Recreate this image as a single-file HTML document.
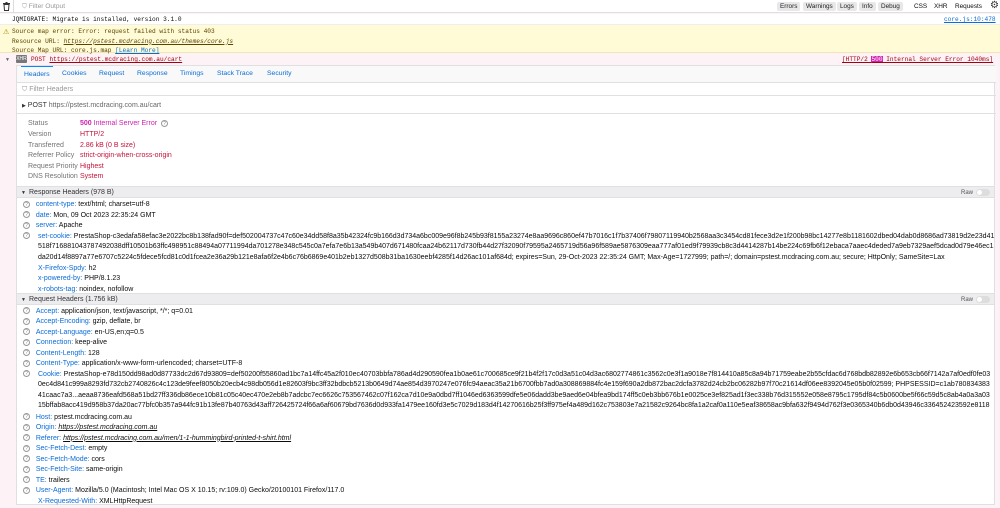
<!DOCTYPE html>
<html><head><meta charset="utf-8"><style>
*{margin:0;padding:0;box-sizing:border-box}
body{width:1000px;height:508px;overflow:hidden;background:#fdf2f5;font-family:"Liberation Sans",sans-serif;font-size:7px;color:#0c0c0d;position:relative}
.abs{position:absolute;white-space:nowrap}
.mono{font-family:"Liberation Mono",monospace;font-size:6.15px}
#tb{left:0;top:0;width:1000px;height:13px;background:#fff;border-bottom:1px solid #e0e0e2}
.btn{position:absolute;top:2px;height:9px;background:#e8e8ea;border-radius:2px;font-size:6.4px;line-height:9px;padding:0 3px;color:#222}
#panel{left:16px;top:65px;width:979px;height:440px;background:#fff;border:1px solid #e0e0e2}
.row{position:absolute;left:0;width:979px;white-space:nowrap;overflow:hidden;line-height:10.6px;height:10.6px}
.lbl{color:#737373}
.red{color:#c5123a}
.k{color:#0a6cd6}
.q{display:inline-block;width:7px;height:7px;border:0.8px solid #999;border-radius:50%;font-size:5px;line-height:6px;text-align:center;color:#888;vertical-align:middle}
.sec{position:absolute;left:0;width:977px;height:12px;background:#ededf0;line-height:12px;font-size:7px;color:#333;padding-left:12px;border-top:1px solid #e0e0e2;border-bottom:1px solid #e0e0e2}
.raw{position:absolute;right:4px;top:0;font-size:6px;color:#555}
.tog{display:inline-block;width:14px;height:7px;border-radius:4px;background:#ddd;vertical-align:middle;margin-left:3px;position:relative}
.tog:after{content:"";position:absolute;left:1px;top:1px;width:5px;height:5px;border-radius:50%;background:#fff}
</style></head><body>
<div id="tb" class="abs">
<svg style="position:absolute;left:3px;top:2px" width="7" height="9" viewBox="0 0 7 9"><rect x="0" y="1" width="7" height="1.2" fill="#333"/><rect x="2.5" y="0" width="2" height="1" fill="#333"/><path d="M1 2.5h5l-.5 6h-4z" fill="none" stroke="#333" stroke-width="1"/></svg>
<div class="abs" style="left:13px;top:0;width:1px;height:13px;background:#ddd"></div>
<div class="abs" style="left:22px;top:3px;font-size:6.6px;color:#999">⛉ Filter Output</div>
<div class="btn" style="left:777px">Errors</div>
<div class="btn" style="left:803px">Warnings</div>
<div class="btn" style="left:837px">Logs</div>
<div class="btn" style="left:859px">Info</div>
<div class="btn" style="left:878px">Debug</div>
<div class="abs" style="left:914px;top:3px;font-size:6.4px">CSS</div>
<div class="abs" style="left:934px;top:3px;font-size:6.4px">XHR</div>
<div class="abs" style="left:955px;top:3px;font-size:6.4px">Requests</div>
<div class="abs" style="left:990px;top:0px;font-size:10px;color:#333">⚙</div>
</div>
<div class="abs" style="left:0;top:14px;width:1000px;height:11px;background:#fff;border-bottom:1px solid #eee"></div>
<div class="abs mono" style="left:12px;top:16px">JQMIGRATE: Migrate is installed, version 3.1.0</div>
<div class="abs mono" style="left:944px;top:16px;color:#0a6cd6;text-decoration:underline">core.js:10:478</div>
<div class="abs" style="left:0;top:25px;width:1000px;height:28px;background:#fffbd6;border-bottom:1px solid #f2e6b3"></div>
<div class="abs" style="left:3px;top:28px;font-size:7px;color:#a47f00">⚠</div>
<div class="abs mono" style="left:12px;top:27px;line-height:9.6px;color:#5c4400">Source map error: Error: request failed with status 403<br>Resource URL: <i style="text-decoration:underline">https://pstest.mcdracing.com.au/themes/core.js</i><br>Source Map URL: core.js.map <span style="color:#0a6cd6;text-decoration:underline">[Learn More]</span></div>
<div class="abs" style="left:5px;top:57px;font-size:5px;color:#666">▼</div>
<div class="abs" style="left:16px;top:55px;width:11px;height:8px;background:#777;color:#fff;font-size:5px;line-height:8px;text-align:center;border-radius:1px">XHR</div>
<div class="abs mono" style="left:31px;top:56px;color:#a4000f">POST <span style="text-decoration:underline">https://pstest.mcdracing.com.au/cart</span></div>
<div class="abs mono" style="left:842px;top:56px;color:#a4000f;text-decoration:underline">[HTTP/2 <span style="background:#d020b0;color:#fff">500</span> Internal Server Error 1040ms]</div>

<div id="panel" class="abs">
<div class="row" style="top:0;height:17px;background:#f9f9fa;border-bottom:1px solid #e0e0e2;line-height:16px;font-size:6.8px;color:#0a6cd6">
<span style="position:absolute;left:4px;padding:0 3px;border-top:1.5px solid #0a84ff;line-height:15px">Headers</span>
<span style="position:absolute;left:45px">Cookies</span><span style="position:absolute;left:82px">Request</span><span style="position:absolute;left:120px">Response</span><span style="position:absolute;left:163px">Timings</span><span style="position:absolute;left:200px">Stack Trace</span><span style="position:absolute;left:250px">Security</span></div>
<div class="row" style="top:17px;height:13px;line-height:13px;color:#999;border-bottom:1px solid #e0e0e2;padding-left:5px">⛉ Filter Headers</div>
<div class="row" style="top:31px;height:17px;line-height:17px;color:#333;padding-left:5px;border-bottom:1px solid #e0e0e2"><span style="font-size:5px">▶</span> POST <span style="color:#666">https://pstest.mcdracing.com.au/cart</span></div>
<div class="row" style="top:53px;padding-left:11px"><span class="lbl" style="display:inline-block;width:52px">Status</span><b style="color:#d020b0">500</b> <span style="color:#d020b0">Internal Server Error</span> &nbsp;<span class="q">?</span></div>
<div class="row" style="top:64px;padding-left:11px"><span class="lbl" style="display:inline-block;width:52px">Version</span><span class="red">HTTP/2</span></div>
<div class="row" style="top:74.5px;padding-left:11px"><span class="lbl" style="display:inline-block;width:52px">Transferred</span><span class="red">2.86 kB (0 B size)</span></div>
<div class="row" style="top:85px;padding-left:11px"><span class="lbl" style="display:inline-block;width:52px">Referrer Policy</span><span class="red">strict-origin-when-cross-origin</span></div>
<div class="row" style="top:95.5px;padding-left:11px"><span class="lbl" style="display:inline-block;width:52px">Request Priority</span><span class="red">Highest</span></div>
<div class="row" style="top:106px;padding-left:11px"><span class="lbl" style="display:inline-block;width:52px">DNS Resolution</span><span class="red">System</span></div>

<div class="sec" style="top:120px"><span style="position:absolute;left:4px;font-size:5px">▼</span>Response Headers (978 B)<span class="raw">Raw<span class="tog"></span></span></div>
<div class="row" style="top:134px;padding-left:6px"><span class="q">?</span> &nbsp;&nbsp;<span class="k">content-type:</span> text/html; charset=utf-8</div>
<div class="row" style="top:144.5px;padding-left:6px"><span class="q">?</span> &nbsp;&nbsp;<span class="k">date:</span> Mon, 09 Oct 2023 22:35:24 GMT</div>
<div class="row" style="top:155px;padding-left:6px"><span class="q">?</span> &nbsp;&nbsp;<span class="k">server:</span> Apache</div>
<div class="row" style="top:165.5px;padding-left:6px;height:32px;white-space:normal;line-height:10.6px"><span style="position:absolute;left:6px;top:0"><span class="q">?</span></span><div style="padding-left:15px;width:972px;word-break:break-all"><span class="k">set-cookie:</span> PrestaShop-c3edafa58efac3e2022bc8b138fad90f=def502004737c47c60e34dd58f8a35b42324fc9b166d3d734a6bc009e96f8b245b93f8155a23274e8aa9696c860ef47b7016c1f7b37406f79807119940b2568aa3c3454cd81fece3d2e1f200b98bc14277e8b1181602dbed04dab0d8686ad73819d2e23d41518f716881043787492038dff10501b63ffc498951c88494a07711994da701278e348c545c0a7efa7e6b13a549b407d671480fcaa24b62117d730fb44d27f32090f79595a2465719d56a96f589ae5876309eaa777af01ed9f79939cb8c3d4414287b14be224c69fb6f12ebaca7aaec4deded7a9eb7329aef5dcad0d79e46ec1da20d14f8897a77e6707c5224c5fdece5fcd81c0d1fcea2e36a29b121e8afa6f2e4b6c76b6869e401b2eb1327d508b31ba1630eebf4285f14d26ac101af684d; expires=Sun, 29-Oct-2023 22:35:24 GMT; Max-Age=1727999; path=/; domain=pstest.mcdracing.com.au; secure; HttpOnly; SameSite=Lax</div></div>
<div class="row" style="top:197.5px;padding-left:21px"><span class="k">X-Firefox-Spdy:</span> h2</div>
<div class="row" style="top:208px;padding-left:21px"><span class="k">x-powered-by:</span> PHP/8.1.23</div>
<div class="row" style="top:218.5px;padding-left:21px"><span class="k">x-robots-tag:</span> noindex, nofollow</div>

<div class="sec" style="top:227px"><span style="position:absolute;left:4px;font-size:5px">▼</span>Request Headers (1.756 kB)<span class="raw">Raw<span class="tog"></span></span></div>
<div class="row" style="top:240.5px;padding-left:6px"><span class="q">?</span> &nbsp;&nbsp;<span class="k">Accept:</span> application/json, text/javascript, */*; q=0.01</div>
<div class="row" style="top:251px;padding-left:6px"><span class="q">?</span> &nbsp;&nbsp;<span class="k">Accept-Encoding:</span> gzip, deflate, br</div>
<div class="row" style="top:261.5px;padding-left:6px"><span class="q">?</span> &nbsp;&nbsp;<span class="k">Accept-Language:</span> en-US,en;q=0.5</div>
<div class="row" style="top:272px;padding-left:6px"><span class="q">?</span> &nbsp;&nbsp;<span class="k">Connection:</span> keep-alive</div>
<div class="row" style="top:282.5px;padding-left:6px"><span class="q">?</span> &nbsp;&nbsp;<span class="k">Content-Length:</span> 128</div>
<div class="row" style="top:293px;padding-left:6px"><span class="q">?</span> &nbsp;&nbsp;<span class="k">Content-Type:</span> application/x-www-form-urlencoded; charset=UTF-8</div>
<div class="row" style="top:303.5px;height:43px;white-space:normal"><span style="position:absolute;left:6px;top:0"><span class="q">?</span></span><div style="padding-left:21px;width:975px;word-break:break-all"><span class="k">Cookie:</span> PrestaShop-e78d150dd98ad0d87733dc2d67d93809=def50200f55860ad1bc7a14ffc45a2f010ec40703bbfa786ad4d290590fea1b0ae61c700685ce9f21b4f2f17c0d3a51c04d3ac6802774861c3562c0e3f1a9018e7f814410a85c8a94b71759eabe2b55cfdac6d768bdb82892e6b653cb66f7142a7af0edf0fe030ec4d841c999a8293fd732cb2740826c4c123de9feef8050b20ecb4c98db056d1e82603f9bc3ff32bdbcb5213b0649d74ae854d3970247e076fc94aeac35a21b6700fbb7ad0a308869884fc4e159f690a2db872bac2dcfa3782d24cb2bc06282b97f70c21614df06ee8392045e05b0f02599; PHPSESSID=c1ab78083438341caac7a3...aeaa8736eafd568a51bd27ff336db86ece10b81c05c40ec470e2eb8b7adcbc7ec6626c753567462c07f162ca7d10e9a0dbd7ff1046ed6363599dfe5e06dadd3be9aed6e04bfea9bd174ff5c0eb3bb676b1e0025ce3ef825ad1f3ec338b76d315552e058e8795c1795df84c5b0600be5f66c59d5c8ab4a0a3a0315bffab8acc419d958b37da20ac77bfc0b357a944fc91b13fe87b40763d43aff726425724f66a6af60679bd7636d0d933fa1479ee160fd3e5c7029d183d4f14270616b25f3ff975ef4a489d162c753803e7a21582c9264bc8fa1a2caf0a110e5eaf38658ac9bfa632f9494d762f3e0365340b6db0d43946c336452423592e8118579d5218fc3a7e6b13a549b407d671480fcaa24b62117d730fb44d27f32090f79595a2465719d56a96f589ae5876309eaa777af01ed9f79939cb8c3d4414287b14be224c69fb6f12ebaca7aaec4deded7a9eb7329aef5dcad0d79e46ec1da20d14f8897a77e6707c5224c5fdece5fcd81c0d1fcea2e36a29b121e8afa6f2e4b6c76b6869e401b2eb1327d508b31ba1630eebf4285f14d26ac101af684d99</div></div>
<div class="row" style="top:346.5px;padding-left:6px"><span class="q">?</span> &nbsp;&nbsp;<span class="k">Host:</span> pstest.mcdracing.com.au</div>
<div class="row" style="top:357px;padding-left:6px"><span class="q">?</span> &nbsp;&nbsp;<span class="k">Origin:</span> <i style="text-decoration:underline">https://pstest.mcdracing.com.au</i></div>
<div class="row" style="top:367.5px;padding-left:6px"><span class="q">?</span> &nbsp;&nbsp;<span class="k">Referer:</span> <i style="text-decoration:underline">https://pstest.mcdracing.com.au/men/1-1-hummingbird-printed-t-shirt.html</i></div>
<div class="row" style="top:378px;padding-left:6px"><span class="q">?</span> &nbsp;&nbsp;<span class="k">Sec-Fetch-Dest:</span> empty</div>
<div class="row" style="top:388.5px;padding-left:6px"><span class="q">?</span> &nbsp;&nbsp;<span class="k">Sec-Fetch-Mode:</span> cors</div>
<div class="row" style="top:399px;padding-left:6px"><span class="q">?</span> &nbsp;&nbsp;<span class="k">Sec-Fetch-Site:</span> same-origin</div>
<div class="row" style="top:409.5px;padding-left:6px"><span class="q">?</span> &nbsp;&nbsp;<span class="k">TE:</span> trailers</div>
<div class="row" style="top:420px;padding-left:6px"><span class="q">?</span> &nbsp;&nbsp;<span class="k">User-Agent:</span> Mozilla/5.0 (Macintosh; Intel Mac OS X 10.15; rv:109.0) Gecko/20100101 Firefox/117.0</div>
<div class="row" style="top:430.5px;padding-left:21px"><span class="k">X-Requested-With:</span> XMLHttpRequest</div>
</div>
</body></html>
